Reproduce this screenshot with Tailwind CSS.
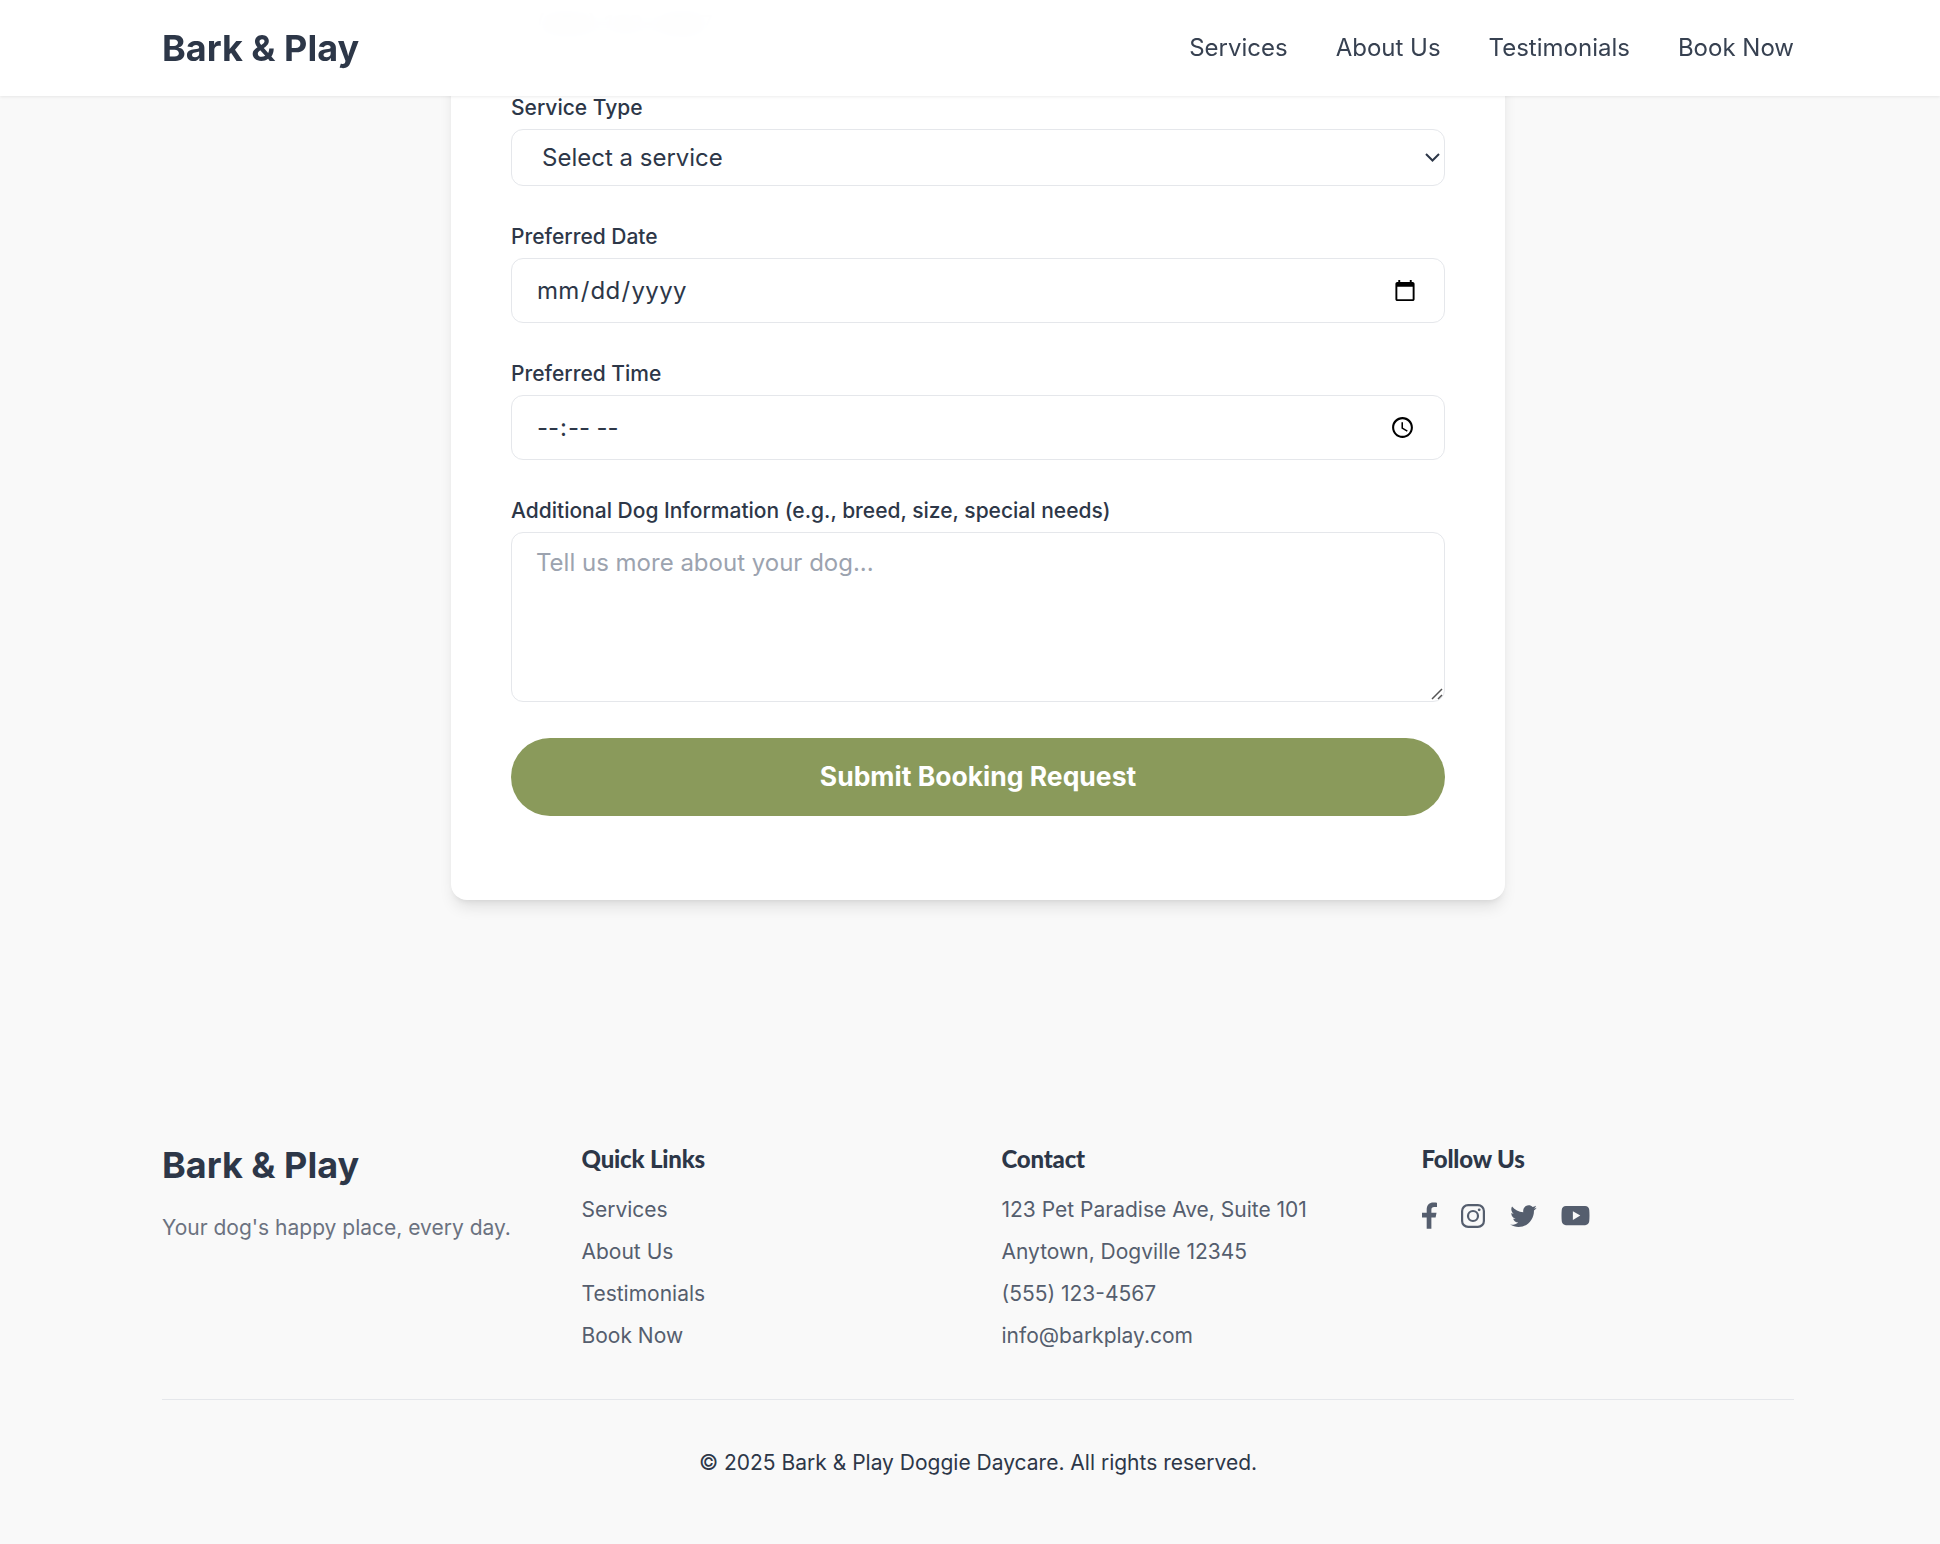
<!DOCTYPE html>
<html lang="en">
<head>
    <meta charset="UTF-8">
    <title>Bark &amp; Play</title>
    <script src="https://cdn.jsdelivr.net/npm/@tailwindcss/browser@4"></script>
</head>
<body class="bg-[#f9f9f9] font-['Inter',sans-serif] text-[#2d3748] overflow-hidden">
    <!-- sticky nav, covers the top of the form card -->
    <header class="absolute top-0 left-0 z-10 w-full h-[96px] bg-white/95 backdrop-blur-md shadow-[0_1px_3px_rgba(0,0,0,0.08)]">
        <div class="w-[1632px] ml-[162px] h-full flex items-center justify-between">
            <a class="text-[36px] leading-[40px] font-bold text-[#2d3748]">Bark &amp; Play</a>
            <nav class="flex gap-[48px] text-[24px] leading-[32px] text-[#374151]">
                <a>Services</a>
                <a>About Us</a>
                <a>Testimonials</a>
                <a>Book Now</a>
            </nav>
        </div>
    </header>

    <main class="h-[1088px] overflow-hidden">
        <section class="w-[1054px] ml-[451px] -mt-[100px] bg-white rounded-b-[16px] shadow-[0_10px_15px_-3px_rgba(0,0,0,0.1),0_4px_6px_-4px_rgba(0,0,0,0.1)] px-[60px] pt-[92px] pb-[84px]">
            <form class="flex flex-col">
                <input type="tel" placeholder="(555) 123-4567" class="h-[65px] rounded-[12px] border border-[#e5e7eb] px-[24px] text-[24px] placeholder:text-[#6b7280] mb-[36px]">

                <label class="text-[21px] leading-[30px] font-medium mb-[6px]">Service Type</label>
                <div class="relative mb-[36px]">
                    <select class="w-full h-[57px] appearance-none rounded-[12px] border border-[#e5e7eb] bg-white pl-[30px] pr-[24px] text-[24px]">
                        <option>Select a service</option>
                    </select>
                    <svg class="absolute right-[5px] top-[24px]" width="15" height="9" viewBox="0 0 15 9" fill="none" stroke="#2d3748" stroke-width="2"><path d="M1 1l6.500 6.500L14 1"/></svg>
                </div>

                <label class="text-[21px] leading-[30px] font-medium mb-[6px]">Preferred Date</label>
                <input type="date" class="h-[65px] rounded-[12px] border border-[#e5e7eb] bg-white px-[24px] text-[24px] tracking-[0.3px] mb-[36px] [&::-webkit-calendar-picker-indicator]:mr-[1px]">

                <label class="text-[21px] leading-[30px] font-medium mb-[6px]">Preferred Time</label>
                <input type="time" class="h-[65px] rounded-[12px] border border-[#e5e7eb] bg-white px-[24px] text-[24px] tracking-[1px] [word-spacing:4px] mb-[36px] [&::-webkit-calendar-picker-indicator]:mr-[2px]">

                <label class="text-[21px] leading-[30px] font-medium mb-[6px]">Additional Dog Information (e.g., breed, size, special needs)</label>
                <div class="relative mb-[36px]">
                    <textarea placeholder="Tell us more about your dog..." class="block w-full h-[170px] resize-none rounded-[12px] border border-[#e5e7eb] bg-white px-[24px] pt-[14px] pb-[12px] text-[24px] leading-[32px] placeholder:text-[#9ca3af]"></textarea>
                    <svg class="absolute right-[2px] bottom-[2px]" width="12" height="12" viewBox="0 0 12 12" fill="none" stroke="#555" stroke-width="1.500"><path d="M1 11 11 1M7 11l4-4"/></svg>
                </div>

                <button type="button" class="h-[78px] rounded-full bg-[#8a9a5b] text-white text-[26.500px] font-bold">Submit Booking Request</button>
            </form>
        </section>
    </main>

    <footer class="h-[456px] pt-[56px]">
        <div class="w-[1632px] ml-[162px]">
            <div class="grid grid-cols-[371.500px_372px_372px_1fr] gap-[48px] h-[256px] border-b border-[#e5e7eb]">
                <div>
                    <div class="text-[36px] leading-[40px] font-bold pt-[1px] mb-[27px]">Bark &amp; Play</div>
                    <p class="text-[21px] leading-[32px] text-[#6b7280]">Your dog's happy place, every day.</p>
                </div>
                <div>
                    <h4 class="font-['Lato',sans-serif] text-[24px] leading-[30px] font-black tracking-[-0.2px] mb-[15px]">Quick Links</h4>
                    <ul class="text-[21px] leading-[42px] text-[#555e6e]">
                        <li>Services</li>
                        <li>About Us</li>
                        <li>Testimonials</li>
                        <li>Book Now</li>
                    </ul>
                </div>
                <div>
                    <h4 class="font-['Lato',sans-serif] text-[24px] leading-[30px] font-black tracking-[-0.2px] mb-[15px]">Contact</h4>
                    <ul class="text-[21px] leading-[42px] text-[#555e6e]">
                        <li>123 Pet Paradise Ave, Suite 101</li>
                        <li>Anytown, Dogville 12345</li>
                        <li>(555) 123-4567</li>
                        <li>info@barkplay.com</li>
                    </ul>
                </div>
                <div>
                    <h4 class="font-['Lato',sans-serif] text-[24px] leading-[30px] font-black tracking-[-0.2px] mb-[28px]">Follow Us</h4>
                    <div class="flex items-center gap-[24.500px] text-[#555e6e]">
                        <svg width="15" height="27" viewBox="0 0 16 28" fill="currentColor"><path d="M5 28V16H0v-5h5V7.500C5 2.500 8 0 12 0c2 0 3.500.2 4 .3V5h-3c-2 0-3 1-3 3v3h5.500l-1 5H10v12z"/></svg>
                        <svg width="24" height="24" viewBox="0 0 24 24" fill="none" stroke="currentColor" stroke-width="2.200"><rect x="1.100" y="1.100" width="21.800" height="21.800" rx="6"/><circle cx="12" cy="12" r="5"/><circle cx="18.200" cy="5.800" r="1.400" fill="currentColor" stroke="none"/></svg>
                        <svg width="27" height="22" viewBox="0 0 24 20" fill="currentColor"><path d="M21.500 5v.6C21.500 12 16.600 20 7.500 20 4.700 20 2.100 19.200 0 17.800c.4 0 .8.100 1.100.100 2.300 0 4.400-.8 6.100-2.100-2.200 0-4-1.500-4.600-3.400.3 0 .6.100.9.100.4 0 .9-.1 1.300-.2C2.500 11.800.9 9.800.9 7.400v-.1c.7.400 1.400.600 2.200.600C1.800 7.100.9 5.500.9 3.800c0-.9.200-1.800.7-2.500 2.400 3 6.100 5 10.200 5.200-.1-.4-.1-.7-.1-1.100C11.700 2.500 13.900.200 16.700.200c1.400 0 2.700.6 3.600 1.600 1.100-.2 2.200-.6 3.100-1.200-.4 1.200-1.100 2.200-2.200 2.800 1-.1 2-.4 2.800-.8-.7 1-1.500 1.800-2.500 2.400z"/></svg>
                        <svg width="29" height="21" viewBox="0 0 32 24" fill="currentColor"><path fill-rule="evenodd" d="M5 1h22c2.500 0 4.500 1.800 4.700 4.300.2 2 .3 4.500.3 6.700s-.1 4.700-.3 6.700C31.500 21.200 29.500 23 27 23H5c-2.500 0-4.500-1.800-4.700-4.300C.1 16.700 0 14.200 0 12s.1-4.700.3-6.700C.5 2.800 2.500 1 5 1zm8 6v10l8.500-5z"/></svg>
                    </div>
                </div>
            </div>
            <p class="pt-[49px] text-center text-[21px] leading-[28px] text-[#2d3748]">© 2025 Bark &amp; Play Doggie Daycare. All rights reserved.</p>
        </div>
    </footer>
</body>
</html>
